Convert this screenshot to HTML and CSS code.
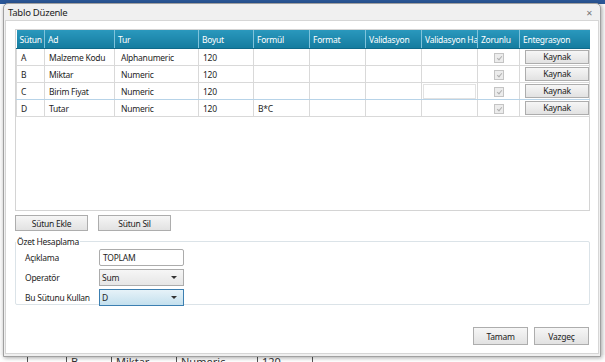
FILE: index.html
```html
<!DOCTYPE html>
<html lang="tr">
    <head>
        <meta charset="UTF-8" />
        <title>Tablo Düzenle</title>
        <link rel="stylesheet" href="styles.css">
    </head>
    <body>
        <div class="desk-bar"></div>
        <div class="desk-fill"></div>
        <div class="desk-row">
            <span class="dc c1"></span>
            <span class="dc c2">B</span>
            <span class="dc c3">Miktar</span>
            <span class="dc c4">Numeric</span>
            <span class="dc c5">120</span>
            <span class="dc c6"></span>
        </div>

        <div class="dialog">
            <div class="title-bar">
                <span class="title">Tablo Düzenle</span>
                <span class="close">&#x2715;</span>
            </div>
            <div class="content">
                <div class="grid">
                    <table>
                        <colgroup>
                            <col style="width: 28px">
                            <col style="width: 70px">
                            <col style="width: 84px">
                            <col style="width: 55px">
                            <col style="width: 56px">
                            <col style="width: 56px">
                            <col style="width: 56px">
                            <col style="width: 56px">
                            <col style="width: 42px">
                            <col style="width: 70px">
                        </colgroup>
                        <thead>
                            <tr>
                                <th>Sütun</th>
                                <th>Ad</th>
                                <th>Tur</th>
                                <th>Boyut</th>
                                <th>Formül</th>
                                <th>Format</th>
                                <th>Validasyon</th>
                                <th>Validasyon Hata</th>
                                <th>Zorunlu</th>
                                <th>Entegrasyon</th>
                            </tr>
                        </thead>
                        <tbody>
                            <tr>
                                <td>A</td>
                                <td>Malzeme Kodu</td>
                                <td class="pad">Alphanumeric</td>
                                <td>120</td>
                                <td></td>
                                <td></td>
                                <td></td>
                                <td></td>
                                <td class="mid"><span class="check"></span></td>
                                <td class="mid"><button class="btn small">Kaynak</button></td>
                            </tr>
                            <tr>
                                <td>B</td>
                                <td>Miktar</td>
                                <td class="pad">Numeric</td>
                                <td>120</td>
                                <td></td>
                                <td></td>
                                <td></td>
                                <td></td>
                                <td class="mid"><span class="check"></span></td>
                                <td class="mid"><button class="btn small">Kaynak</button></td>
                            </tr>
                            <tr class="selected">
                                <td>C</td>
                                <td>Birim Fiyat</td>
                                <td class="pad">Numeric</td>
                                <td>120</td>
                                <td></td>
                                <td></td>
                                <td></td>
                                <td class="editing"><span class="edit-box"></span></td>
                                <td class="mid"><span class="check"></span></td>
                                <td class="mid"><button class="btn small">Kaynak</button></td>
                            </tr>
                            <tr>
                                <td>D</td>
                                <td>Tutar</td>
                                <td class="pad">Numeric</td>
                                <td>120</td>
                                <td>B*C</td>
                                <td></td>
                                <td></td>
                                <td></td>
                                <td class="mid"><span class="check"></span></td>
                                <td class="mid"><button class="btn small">Kaynak</button></td>
                            </tr>
                        </tbody>
                    </table>
                </div>

                <div class="grid-actions">
                    <button class="btn wide">Sütun Ekle</button>
                    <button class="btn wide">Sütun Sil</button>
                </div>

                <fieldset class="summary">
                    <legend>Özet Hesaplama</legend>
                    <div class="field">
                        <label>Açıklama</label>
                        <div class="text-box">TOPLAM</div>
                    </div>
                    <div class="field">
                        <label>Operatör</label>
                        <div class="combo">Sum<span class="arrow"></span></div>
                    </div>
                    <div class="field">
                        <label>Bu Sütunu Kullan</label>
                        <div class="combo active">D<span class="arrow"></span></div>
                    </div>
                </fieldset>

                <div class="dialog-actions">
                    <button class="btn footer">Tamam</button>
                    <button class="btn footer">Vazgeç</button>
                </div>
            </div>
        </div>
    </body>
</html>
```

FILE: styles.css
```css
body {
    margin: 0;
    width: 605px;
    height: 362px;
    overflow: hidden;
    position: relative;
    background-color: #fafafa;
    font-family: 'Noto Sans', 'Open Sans', sans-serif;
    font-size: 8.5px;
    letter-spacing: -0.25px;
    color: #1e1e1e;
    display: flex;
    flex-direction: column;
}
.desk-bar {
    height: 4px;
    background-color: #2b5797;
}
.desk-fill {
    flex: 1;
}
.desk-row {
    height: 7px;
    display: flex;
    font-size: 11px;
    line-height: 13px;
    letter-spacing: 0;
    color: #333;
    background-color: #fff;
}
.dc {
    border-left: 1px solid #555;
    padding-left: 4px;
}
.c1 { width: 34px; margin-left: 27px; }
.c2 { width: 40px; }
.c3 { width: 60px; }
.c4 { width: 76px; }
.c5 { width: 50px; }
.c6 { width: 80px; }

/* окно диалога */
.dialog {
    position: absolute;
    left: 3px;
    top: 3px;
    width: 596px;
    height: 352px;
    border: 1px solid #a0a0a0;
    border-radius: 5px 5px 0 0;
    background-color: #f0f0f0;
    box-shadow: 1px 1px 4px rgba(0, 0, 0, 0.35);
    display: flex;
    flex-direction: column;
}
.title-bar {
    height: 15px;
    display: flex;
    align-items: center;
    justify-content: space-between;
    padding: 1px 7px 0 4px;
}
.title {
    font-size: 9.5px;
    color: #222;
}
.close {
    font-size: 8px;
    color: #777;
}
.content {
    flex: 1;
    margin: 0 1px 2px 1px;
    background-color: #fff;
    border: 1px solid #d6d6d6;
    padding: 8px 6px 0 9px;
    display: flex;
    flex-direction: column;
}

/* таблица */
.grid {
    width: 573px;
    height: 180px;
    border: 1px solid #d4d4d4;
    background-color: #fff;
}
table {
    border-collapse: collapse;
    table-layout: fixed;
    width: 573px;
}
th {
    height: 18px;
    padding: 0 3px;
    text-align: left;
    font-weight: normal;
    color: #fff;
    white-space: nowrap;
    overflow: hidden;
    text-overflow: clip;
    background: linear-gradient(#2a98bd, #157c9f);
    border-left: 1px solid #7fc3dc;
    border-bottom: 1px solid #0f6a8a;
}
th:first-child {
    border-left: none;
}
td {
    height: 16px;
    padding: 0 4px;
    border: 1px solid #d9d9d9;
    border-top: none;
    white-space: nowrap;
    overflow: hidden;
}
td.pad {
    padding-left: 6px;
}
td.mid {
    text-align: center;
    padding: 0 2px;
}
tr.selected td {
    border-top: 1px solid #b7d3e8;
    border-bottom: 1px solid #b7d3e8;
}
td.editing {
    padding: 0 1px;
}
.edit-box {
    display: block;
    height: 13px;
    border: 1px solid #e2e2e2;
    background-color: #fff;
}
.check {
    display: inline-block;
    width: 8px;
    height: 8px;
    border: 1px solid #c4c4c4;
    background-color: #ececec;
    vertical-align: middle;
    position: relative;
}
.check::after {
    content: '';
    position: absolute;
    left: 3px;
    top: 1px;
    width: 2px;
    height: 4px;
    border: solid #b0b0b0;
    border-width: 0 1px 1px 0;
    transform: rotate(40deg);
}

/* кнопки */
.btn {
    font-family: inherit;
    font-size: 8.5px;
    letter-spacing: -0.25px;
    color: #222;
    background: linear-gradient(#f6f6f6, #e2e2e2);
    border: 1px solid #adadad;
    padding: 0;
    cursor: pointer;
}
.btn.small {
    width: 64px;
    height: 14px;
    line-height: 12px;
    display: block;
    margin-left: 3px;
}
.btn.wide {
    width: 73px;
    height: 16px;
}
.btn.footer {
    width: 55px;
    height: 18px;
}
.grid-actions {
    display: flex;
    gap: 10px;
    margin-top: 4px;
}

/* группа итогов */
.summary {
    width: 564px;
    height: 67px;
    margin: 5px 0 0 0;
    padding: 0 0 0 9px;
    border: 1px solid #dbe3e8;
    border-radius: 2px;
    box-sizing: content-box;
}
.summary legend {
    padding: 0 1px;
    margin-left: -9px;
    color: #222;
}
.field {
    display: flex;
    align-items: center;
    height: 20px;
}
.field label {
    width: 74px;
}
.text-box {
    width: 77px;
    height: 15px;
    line-height: 15px;
    padding: 0 3px;
    border: 1px solid #acacac;
    border-radius: 2px;
    background-color: #fff;
}
.combo {
    width: 79px;
    height: 15px;
    line-height: 15px;
    padding: 0 2px;
    border: 1px solid #acacac;
    background: linear-gradient(#f6f6f6, #e6e6e6);
    position: relative;
}
.combo.active {
    border-color: #3c7fb1;
    background: linear-gradient(#e6f2f8, #c4e0ee);
}
.arrow {
    position: absolute;
    right: 6px;
    top: 6px;
    border-left: 3px solid transparent;
    border-right: 3px solid transparent;
    border-top: 3px solid #333;
}
.dialog-actions {
    display: flex;
    justify-content: flex-end;
    gap: 6px;
    margin-top: 22px;
    padding-right: 3px;
}
```
